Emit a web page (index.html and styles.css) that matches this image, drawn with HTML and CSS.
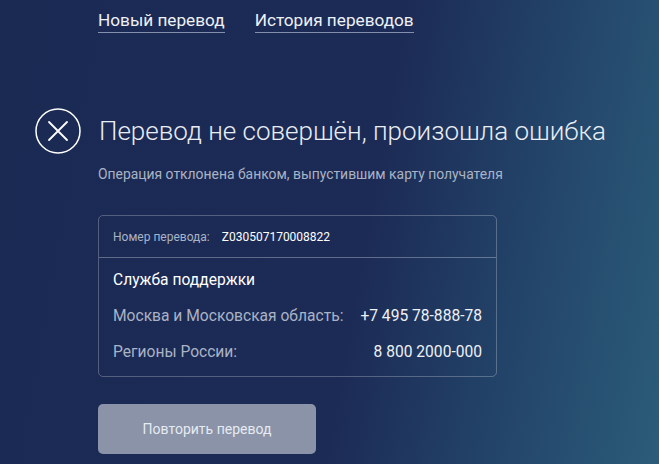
FILE: index.html
```html
<!DOCTYPE html>
<html lang="ru">
  <head>
    <meta charset="UTF-8" />
    <meta name="viewport" content="width=device-width, initial-scale=1.0" />
    <title>Перевод не совершён</title>
    <link rel="stylesheet" href="styles.css">
  </head>
  <body>
    <div class="page">
      <nav class="nav">
        <a href="#" class="nav-link">Новый перевод</a>
        <a href="#" class="nav-link">История переводов</a>
      </nav>

      <div class="status">
        <svg class="status-icon" width="46" height="46" viewBox="0 0 46 46">
          <circle cx="23" cy="23" r="22" fill="none" stroke="#fff" stroke-width="1.5" />
          <path d="M14 14 L32 32 M32 14 L14 32" stroke="#fff" stroke-width="1.8" stroke-linecap="round" />
        </svg>
        <h1 class="status-title">Перевод не совершён, произошла ошибка</h1>
      </div>
      <p class="status-text">Операция отклонена банком, выпустившим карту получателя</p>

      <div class="card">
        <div class="card-head">
          <span class="card-label">Номер перевода:</span>
          <span class="card-value">Z030507170008822</span>
        </div>
        <div class="card-body">
          <div class="support-title">Служба поддержки</div>
          <div class="support-row">
            <span>Москва и Московская область:</span>
            <span class="phone">+7 495 78-888-78</span>
          </div>
          <div class="support-row">
            <span>Регионы России:</span>
            <span class="phone">8 800 2000-000</span>
          </div>
        </div>
      </div>

      <button class="btn" type="button">Повторить перевод</button>
    </div>
  </body>
</html>
```

FILE: styles.css
```css
html {
  height: 100%;
}
body {
  margin: 0;
  min-height: 100%;
  font-family: Roboto, "Liberation Sans", sans-serif;
  color: #fff;
  background: linear-gradient(100deg, #1b2a53 0%, #1c2b56 55%, #24476b 80%, #2b5c79 100%);
}
.page {
  padding: 10px 0 0 98px;
}
.nav {
  display: flex;
  gap: 30px;
}
.nav-link {
  color: #eef1f6;
  font-size: 17.2px;
  line-height: 21px;
  text-decoration: none;
  border-bottom: 1px solid #8290ab;
  padding-bottom: 1px;
}
.status {
  display: flex;
  align-items: center;
  gap: 18px;
  margin: 75px 0 0 -63px;
}
.status-icon {
  flex: none;
}
.status-title {
  margin: 0;
  font-size: 26px;
  font-weight: 300;
  color: #e9edf4;
}
.status-text {
  margin: 12px 0 0;
  font-size: 13.9px;
  color: #aab3c6;
}
.card {
  width: 397px;
  margin-top: 33px;
  border: 1px solid rgba(255, 255, 255, 0.25);
  border-radius: 5px;
}
.card-head {
  display: flex;
  align-items: center;
  gap: 12px;
  height: 41px;
  padding: 0 14px;
  border-bottom: 1px solid rgba(255, 255, 255, 0.3);
  font-size: 12px;
}
.card-label {
  color: #aab3c6;
}
.card-value {
  color: #fff;
}
.card-body {
  padding: 10px 14px 0;
}
.support-title {
  font-size: 15.6px;
  line-height: 24px;
  margin-bottom: 12px;
}
.support-row {
  display: flex;
  justify-content: space-between;
  font-size: 15.6px;
  line-height: 24px;
  margin-bottom: 12px;
  color: #aab3c6;
}
.phone {
  color: #eef1f6;
}
.btn {
  display: block;
  width: 218px;
  height: 50px;
  margin-top: 27px;
  border: 0;
  border-radius: 5px;
  background: #8a93a8;
  color: #e6eaf1;
  font-family: Roboto, "Liberation Sans", sans-serif;
  font-size: 14px;
}
```
